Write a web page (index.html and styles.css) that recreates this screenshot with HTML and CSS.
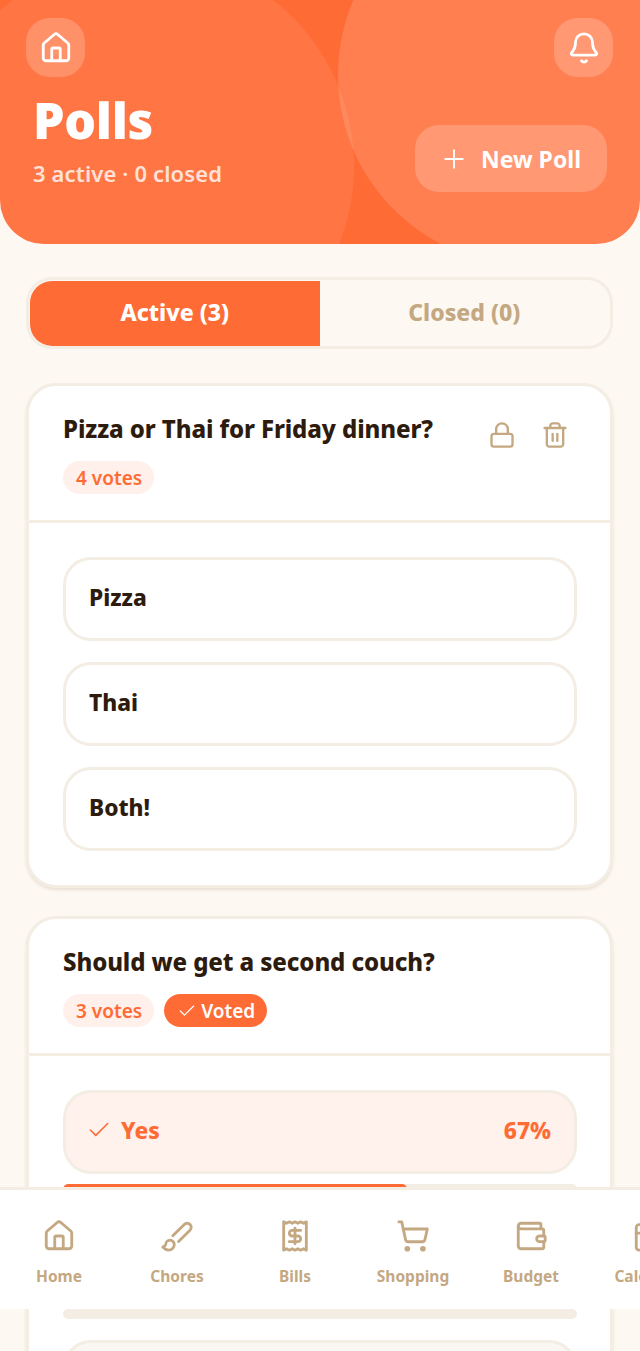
FILE: index.html
```html
<!DOCTYPE html>
<html lang="en">
<head>
<meta charset="utf-8">
<title>Polls</title>
<link rel="stylesheet" href="styles.css">
</head>
<body>
<div class="app">
  <header class="hero">
    <span class="blob blob-left"></span>
    <span class="blob blob-right"></span>
    <div class="hero-top">
      <button class="round-btn"><svg class="ic ic-34" viewBox="0 0 24 24"><path d="M15 21v-8a1 1 0 0 0-1-1h-4a1 1 0 0 0-1 1v8"/><path d="M3 10a2 2 0 0 1 .709-1.528l7-5.999a2 2 0 0 1 2.582 0l7 5.999A2 2 0 0 1 21 10v9a2 2 0 0 1-2 2H5a2 2 0 0 1-2-2z"/></svg></button>
      <button class="round-btn"><svg class="ic ic-34" viewBox="0 0 24 24"><path d="M10.268 21a2 2 0 0 0 3.464 0"/><path d="M3.262 15.326A1 1 0 0 0 4 17h16a1 1 0 0 0 .74-1.673C19.41 13.956 18 12.499 18 8A6 6 0 0 0 6 8c0 4.499-1.411 5.956-2.738 7.326"/></svg></button>
    </div>
    <div class="hero-main">
      <div class="hero-text">
        <h1>Polls</h1>
        <p>3 active · 0 closed</p>
      </div>
      <button class="new-poll"><svg class="ic ic-30 thin" viewBox="0 0 24 24"><path d="M5 12h14"/><path d="M12 5v14"/></svg><span>New Poll</span></button>
    </div>
  </header>

  <main class="content">
    <div class="tabs">
      <div class="tab tab-on">Active (3)</div>
      <div class="tab">Closed (0)</div>
    </div>

    <section class="card">
      <div class="card-head">
        <div class="head-row">
          <h2>Pizza or Thai for Friday dinner?</h2>
          <div class="actions">
            <button class="act"><svg class="ic ic-28" viewBox="0 0 24 24"><rect x="3" y="11" width="18" height="11" rx="2"/><path d="M7 11V7a5 5 0 0 1 10 0v4"/></svg></button>
            <button class="act"><svg class="ic ic-28" viewBox="0 0 24 24"><path d="M3 6h18"/><path d="M19 6v14c0 1-1 2-2 2H7c-1 0-2-1-2-2V6"/><path d="M8 6V4c0-1 1-2 2-2h4c1 0 2 1 2 2v2"/><path d="M10 11v6"/><path d="M14 11v6"/></svg></button>
          </div>
        </div>
        <div class="pills"><span class="pill">4 votes</span></div>
      </div>
      <div class="card-body">
        <div class="option">Pizza</div>
        <div class="option">Thai</div>
        <div class="option">Both!</div>
      </div>
    </section>

    <section class="card">
      <div class="card-head">
        <h2>Should we get a second couch?</h2>
        <div class="pills">
          <span class="pill">3 votes</span>
          <span class="pill pill-on"><svg class="ic ic-20 thin" viewBox="0 0 24 24"><path d="M20 6 9 17l-5-5"/></svg>Voted</span>
        </div>
      </div>
      <div class="card-body">
        <div class="result">
          <div class="option option-picked">
            <span class="opt-label"><svg class="ic ic-26 thin check" viewBox="0 0 24 24"><path d="M20 6 9 17l-5-5"/></svg>Yes</span>
            <span>67%</span>
          </div>
          <div class="bar"><div class="bar-fill" style="width:67%"></div></div>
        </div>
        <div class="result">
          <div class="option option-other"></div>
          <div class="bar"></div>
        </div>
        <div class="result">
          <div class="option option-other"></div>
        </div>
      </div>
    </section>
  </main>

  <nav class="tabbar">
    <div class="nav-item"><svg class="ic ic-34" viewBox="0 0 24 24"><path d="M15 21v-8a1 1 0 0 0-1-1h-4a1 1 0 0 0-1 1v8"/><path d="M3 10a2 2 0 0 1 .709-1.528l7-5.999a2 2 0 0 1 2.582 0l7 5.999A2 2 0 0 1 21 10v9a2 2 0 0 1-2 2H5a2 2 0 0 1-2-2z"/></svg><span>Home</span></div>
    <div class="nav-item"><svg class="ic ic-34" viewBox="0 0 24 24"><path d="m9.06 11.9 8.07-8.06a2.85 2.85 0 1 1 4.03 4.03l-8.06 8.08"/><path d="M7.07 14.94c-1.66 0-3 1.35-3 3.02 0 1.33-2.5 1.52-2 2.02 1.08 1.1 2.49 2.02 4 2.02 2.2 0 4-1.8 4-4.04a3.01 3.01 0 0 0-3-3.02z"/></svg><span>Chores</span></div>
    <div class="nav-item"><svg class="ic ic-34" viewBox="0 0 24 24"><path d="M4 2v20l2-1 2 1 2-1 2 1 2-1 2 1 2-1 2 1V2l-2 1-2-1-2 1-2-1-2 1-2-1-2 1Z"/><path d="M16 8h-6a2 2 0 1 0 0 4h4a2 2 0 1 1 0 4H8"/><path d="M12 17.5v-11"/></svg><span>Bills</span></div>
    <div class="nav-item"><svg class="ic ic-34" viewBox="0 0 24 24"><circle cx="8" cy="21" r="1"/><circle cx="19" cy="21" r="1"/><path d="M2.05 2.05h2l2.66 12.42a2 2 0 0 0 2 1.58h9.78a2 2 0 0 0 1.95-1.57l1.65-7.43H5.12"/></svg><span>Shopping</span></div>
    <div class="nav-item"><svg class="ic ic-34" viewBox="0 0 24 24"><path d="M19 7V4a1 1 0 0 0-1-1H5a2 2 0 0 0 0 4h15a1 1 0 0 1 1 1v4h-3a2 2 0 0 0 0 4h3a1 1 0 0 0 1-1v-2a1 1 0 0 0-1-1"/><path d="M3 5v14a2 2 0 0 0 2 2h15a1 1 0 0 0 1-1v-4"/></svg><span>Budget</span></div>
    <div class="nav-item"><svg class="ic ic-34" viewBox="0 0 24 24"><path d="M8 2v4"/><path d="M16 2v4"/><rect x="3" y="4" width="18" height="18" rx="2"/><path d="M3 10h18"/></svg><span>Calendar</span></div>
  </nav>
</div>
</body>
</html>
```

FILE: styles.css
```css
* { box-sizing: border-box; }
html, body { margin: 0; padding: 0; }
body { font-family: "Noto Sans", "Lato", sans-serif; color: #2d1b0e; background: #fdf8f2; }
h1, h2, p { margin: 0; }
button { font: inherit; border: 0; padding: 0; background: none; color: inherit; }

.app { position: relative; width: 640px; height: 1351px; overflow: hidden; background: #fdf8f2; }

.ic { display: block; flex: none; fill: none; stroke: currentColor; stroke-width: 2; stroke-linecap: round; stroke-linejoin: round; }
.thin { stroke-width: 1.5; }
.ic-34 { width: 34px; height: 34px; }
.ic-30 { width: 30px; height: 30px; }
.ic-28 { width: 28px; height: 28px; }
.ic-26 { width: 26px; height: 26px; }
.ic-20 { width: 20px; height: 20px; }

.hero { position: relative; height: 244px; padding: 18px 27px 0 26px; overflow: hidden; background: #ff6b35; border-radius: 0 0 44px 44px; color: #fff; }
.blob { position: absolute; border-radius: 50%; }
.blob-left { left: -68px; top: -45px; width: 422px; height: 422px; background: rgba(255,255,255,.08); }
.blob-right { left: 338px; top: -115px; width: 380px; height: 380px; background: rgba(255,255,255,.14); }

.hero-top { position: relative; display: flex; justify-content: space-between; }
.round-btn { display: flex; align-items: center; justify-content: center; width: 59px; height: 59px; border-radius: 24px; background: rgba(255,255,255,.2); color: #fff; }
.hero-main { position: relative; display: flex; justify-content: space-between; align-items: flex-start; margin-top: 14px; padding-left: 7px; }
.hero-text h1 { font-size: 50px; line-height: 58px; font-weight: 900; letter-spacing: -.3px; }
.hero-text p { margin-top: 9px; font-size: 22px; line-height: 30px; font-weight: 600; letter-spacing: .15px; color: rgba(255,255,255,.8); }
.new-poll { display: flex; align-items: center; gap: 12px; height: 67px; margin: 34px 6px 0 0; padding: 0 26px 0 24px; border-radius: 24px; background: rgba(255,255,255,.2); color: #fff; font-size: 23px; font-weight: 700; }

.content { padding: 33px 27px 0 26px; }
.tabs { display: flex; height: 72px; border: 3px solid #f3ede4; border-radius: 26px; padding: 1px 1px 0; background: #fdf8f2; overflow: hidden; }
.tab { flex: 1; display: flex; align-items: center; justify-content: center; padding-bottom: 3px; font-size: 23px; font-weight: 800; color: #c4a882; }
.tab-on { background: #ff6b35; color: #fff; border-radius: 22px 0 0 22px; }

.card { margin-top: 34px; background: #fff; border: 3px solid #f3ede4; border-radius: 30px; box-shadow: 0 2px 3px rgba(120,90,50,.14); }
.card + .card { margin-top: 28px; }
.card-head { padding: 26px 33px 26px 34px; border-bottom: 3px solid #f3ede4; }
.head-row { display: flex; justify-content: space-between; }
.card-head h2 { font-size: 24px; line-height: 34px; font-weight: 800; letter-spacing: -.1px; color: #2d1b0e; }
.actions { display: flex; gap: 9px; color: #c4a882; }
.act { display: flex; align-items: center; justify-content: center; width: 44px; height: 44px; margin-top: 1px; }
.head-row .actions { margin-bottom: -11px; }
.pills { display: flex; gap: 10px; margin-top: 15px; }
.pill { display: flex; align-items: center; gap: 4px; height: 33px; padding: 0 12px 0 13px; border-radius: 17px; background: #fff0eb; color: #ff6b35; font-size: 19px; font-weight: 600; }
.pill-on { background: #ff6b35; color: #fff; }

.card-body { display: flex; flex-direction: column; gap: 21px; padding: 34px 33px 34px 34px; }
.option { display: flex; align-items: center; justify-content: space-between; height: 84px; padding: 0 23px 4px; border: 3px solid #f3ede4; border-radius: 28px; background: #fff; font-size: 22.7px; font-weight: 800; color: #2d1b0e; }
.option-picked { background: #fff1ec; color: #ff6b35; }
.option-other { background: #faf7f3; }
.opt-label { display: flex; align-items: center; gap: 9px; }
.check { margin-left: -3px; }
.bar { height: 10px; margin-top: 10px; border-radius: 5px; background: #f3ede4; overflow: hidden; }
.bar-fill { height: 100%; background: #ff6b35; border-radius: 5px; }

.tabbar { position: absolute; left: 0; right: 0; bottom: 42px; display: flex; height: 122px; padding-top: 29px; overflow: hidden; background: #fff; border-top: 3px solid #f3ede4; }
.nav-item { flex: none; width: 118px; display: flex; flex-direction: column; align-items: center; gap: 12px; color: #c4a882; font-size: 15.5px; line-height: 22px; font-weight: 700; }
```
